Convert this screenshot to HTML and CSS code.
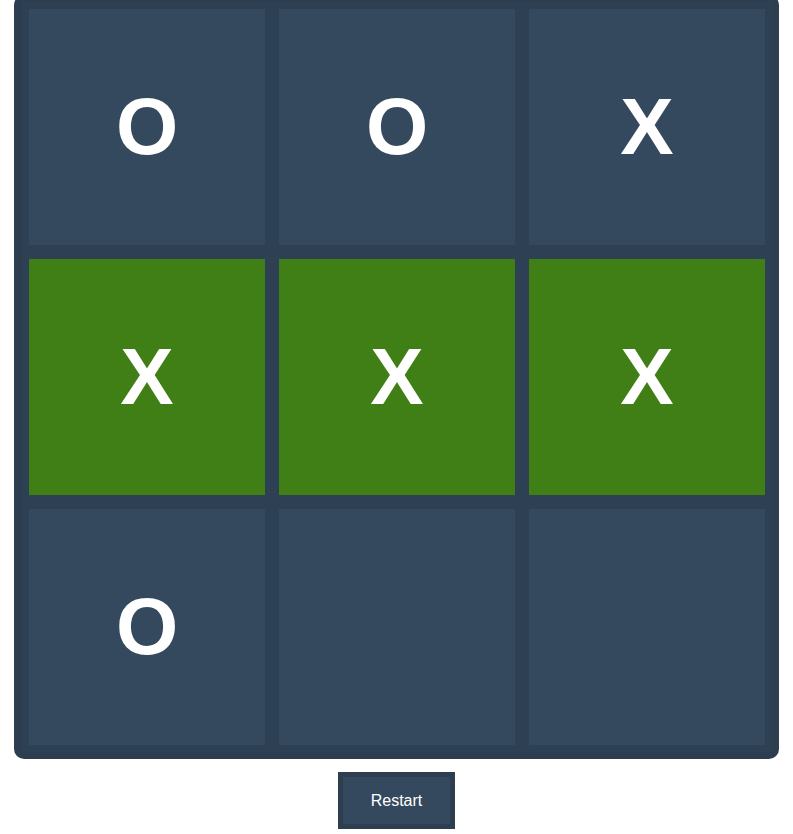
FILE: index.html
```html
<!DOCTYPE html>
<html>
<head>
<meta charset="utf-8">
<link rel="stylesheet" href="styles.css">
</head>
<body>
<div class="game">
  <div class="board">
    <div class="cell">O</div>
    <div class="cell">O</div>
    <div class="cell">X</div>
    <div class="cell win">X</div>
    <div class="cell win">X</div>
    <div class="cell win">X</div>
    <div class="cell">O</div>
    <div class="cell"></div>
    <div class="cell"></div>
  </div>
  <button class="restart">Restart</button>
</div>
</body>
</html>
```
FILE: styles.css
```css
html, body {
  margin: 0;
  padding: 0;
  background: #ffffff;
}
body {
  font-family: "Liberation Sans", Arial, sans-serif;
}
.game {
  display: flex;
  flex-direction: column;
  align-items: center;
  gap: 13px;
  margin-top: -5px;
}
.board {
  display: grid;
  grid-template-columns: repeat(3, 250px);
  grid-template-rows: repeat(3, 250px);
  padding: 7px 7px 7px 8px;
  background: #2c3e50;
  border-radius: 10px;
}
.cell {
  box-sizing: border-box;
  border: 7px solid #2e4154;
  background: #34495e;
  color: #ffffff;
  font-size: 80px;
  font-weight: bold;
  display: flex;
  align-items: center;
  justify-content: center;
}
.cell.win {
  background: #3f7f16;
}
.restart {
  box-sizing: border-box;
  width: 117px;
  height: 57px;
  border: 5px solid #2c3e50;
  background: #34495e;
  color: #ffffff;
  font-family: "Liberation Sans", Arial, sans-serif;
  font-size: 16px;
  padding: 0;
  cursor: pointer;
}
```
